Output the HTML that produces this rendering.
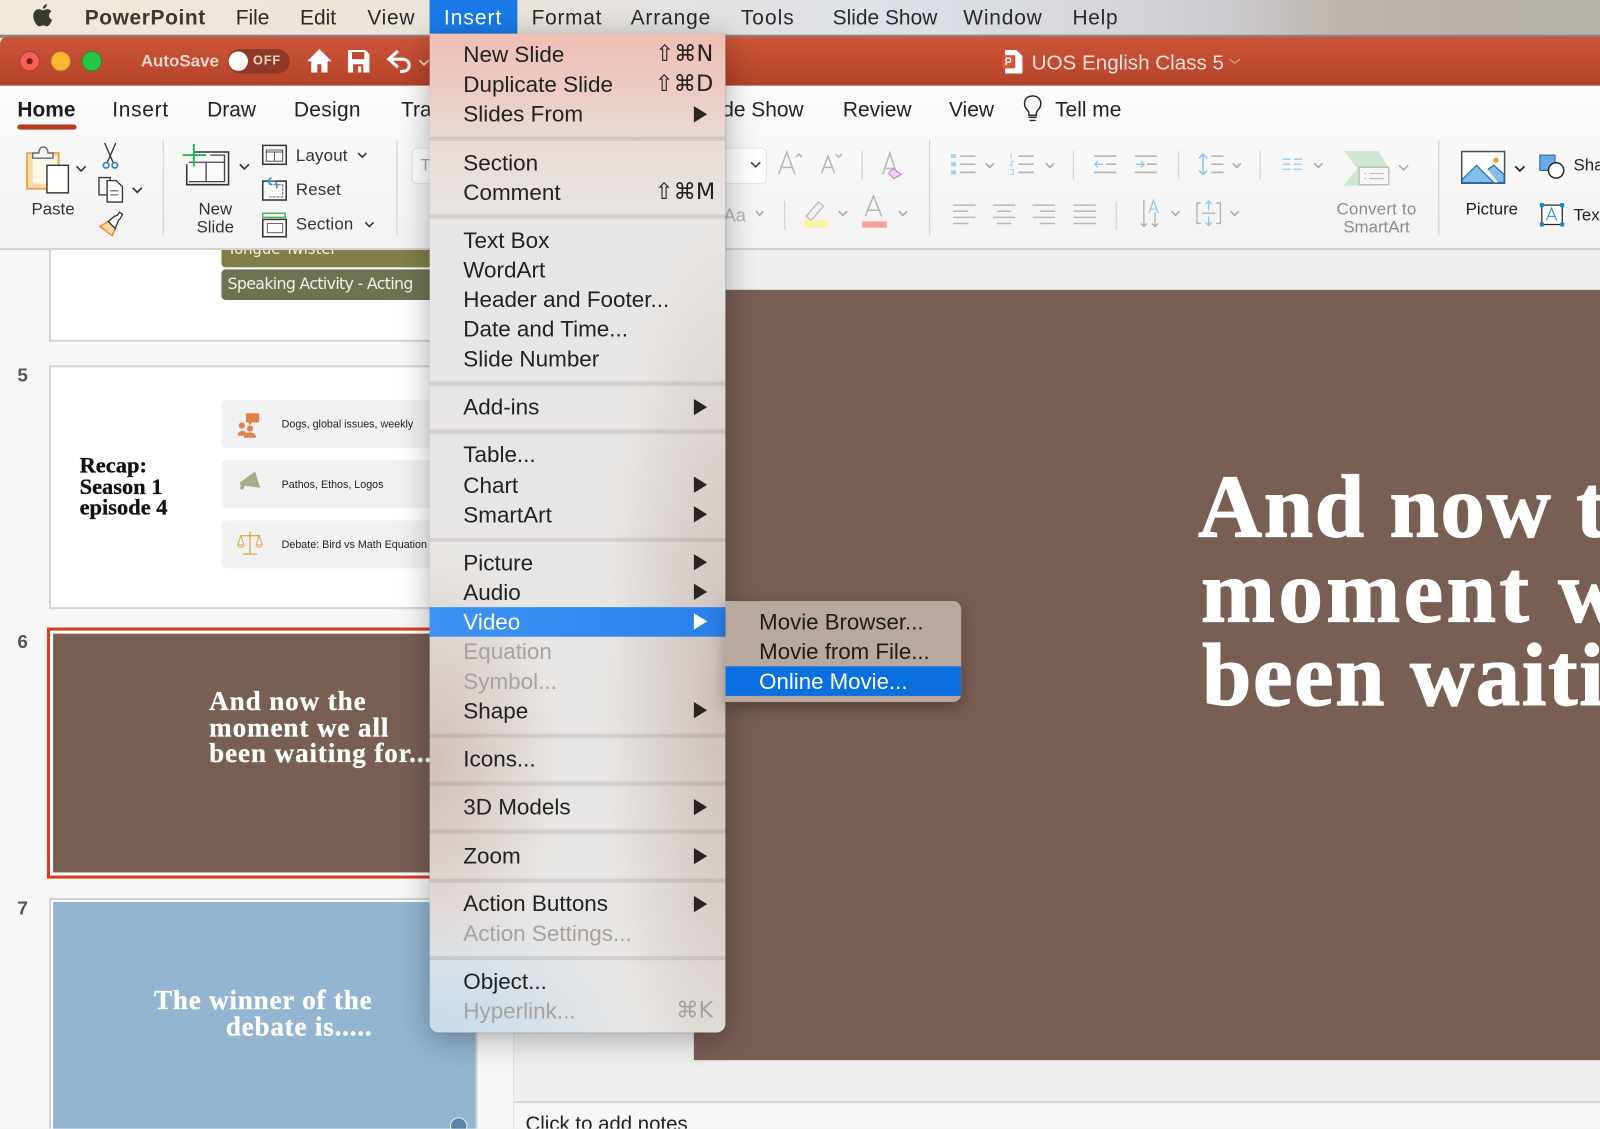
<!DOCTYPE html>
<html><head><meta charset="utf-8"><title>PowerPoint</title>
<style>
html,body{margin:0;padding:0;width:1600px;height:1128px;overflow:hidden;background:#efefef}
#s{position:absolute;left:0;top:0;width:1568px;height:1106px;transform:scale(1.020408);transform-origin:0 0;overflow:hidden;font-family:"Liberation Sans",sans-serif;color:#262626}
#s div,#s span.a{position:absolute;white-space:nowrap}
.t{line-height:26px;height:26px}
.m{font-size:20.5px;color:#2a2a2a;top:5px}
.r{font-size:20.5px;color:#222;top:95px}
.l{font-size:16.5px;color:#333;line-height:20px;height:20px}
.c{transform:translateX(-50%);text-align:center}
.ser{font-family:"Liberation Serif",serif;font-weight:bold;-webkit-text-stroke:.3px currentColor}
#menu{left:421px;top:33px;width:290px;height:979px;border-radius:0 0 9px 9px;
 background:
  radial-gradient(ellipse 210px 125px at 0 100%,rgba(195,218,236,.95),rgba(195,218,236,0)),
  radial-gradient(ellipse 130px 210px at 0 715px,rgba(190,158,148,.55),rgba(190,158,148,0)),
  radial-gradient(ellipse 120px 470px at 100% 650px,rgba(172,142,130,.45),rgba(172,142,130,0)),
  linear-gradient(180deg,#eebfb5 0,#edcac1 50px,#e9dbd6 105px,#e8e6e4 190px,#e8e6e4 100%);
 box-shadow:0 6px 30px rgba(0,0,0,.3),0 0 1px rgba(0,0,0,.3);overflow:hidden}
#menu .i{left:33px;font-size:22px;line-height:26px;height:26px;color:#222;margin-top:1px}
#menu .d{color:#a5a2a0}
#menu .k{left:218px;width:60px;text-align:right;font-size:22px;line-height:26px;height:26px;color:#222;font-family:"DejaVu Sans","Liberation Sans",sans-serif;letter-spacing:0;margin-top:1px}
#menu .sep{left:0;width:290px;height:4px;background:rgba(100,90,85,.15);margin-top:1px}
#menu svg{position:absolute;left:258px}
</style></head><body>
<div id="s">

<!-- menu bar -->
<div style="left:0;top:0;width:1568px;height:34px;background:linear-gradient(90deg,#f1e9da 0,#ece5d8 22%,#e2e1e2 45%,#dde1e7 55%,#d5d6dc 70%,#cbcacd 77%,#bdb4ad 84%,#b7b0a8 92%,#b3b1aa 100%)"></div>
<svg style="position:absolute;left:30px;top:3px" width="24" height="25" viewBox="0 0 24 25"><path fill="#3b3a30" d="M16 1c.2 2-1.600 4.500-4 4.600C11.700 3.400 13.900 1.300 16 1zM12.100 7.200c1 0 2.300-1.200 4.200-1.200 1.700 0 3.200.9 4.100 2.300-3.500 2.100-2.900 6.800.7 8.200-.7 1.700-2.800 6.300-5.300 6.300-1.300 0-1.900-.9-3.500-.9-1.700 0-2.300.9-3.600.9-2.700 0-6.100-5.600-6.100-10.200C2.600 8.500 5.400 6 8 6c1.700 0 3.100 1.200 4.100 1.200z"/></svg>
<div class="m t" style="left:83px;font-weight:bold;color:#3a3a2e;letter-spacing:.6px">PowerPoint</div>
<div class="m t" style="left:231px">File</div>
<div class="m t" style="left:294px">Edit</div>
<div class="m t" style="left:360px;letter-spacing:.7px">View</div>
<div style="left:421px;top:0;width:86px;height:33px;background:#197ae8"></div>
<div class="m t" style="left:435px;color:#fff;letter-spacing:1px">Insert</div>
<div class="m t" style="left:521px;letter-spacing:.7px">Format</div>
<div class="m t" style="left:618px;letter-spacing:.85px">Arrange</div>
<div class="m t" style="left:726px;letter-spacing:1px">Tools</div>
<div class="m t" style="left:816px">Slide Show</div>
<div class="m t" style="left:944px;letter-spacing:.8px">Window</div>
<div class="m t" style="left:1051px;letter-spacing:.7px">Help</div>

<!-- title bar -->
<div style="left:0;top:34px;width:1568px;height:3px;background:#8a8580"></div>
<div style="left:0;top:36px;width:1568px;height:48px;border-radius:7px 0 0 0;background:linear-gradient(180deg,#cb553a 0,#c24c31 50%,#b3432a 100%)"></div>
<svg style="position:absolute;left:0;top:36px" width="1568" height="48" viewBox="0 36 1568 48">
 <circle cx="29" cy="60" r="9.5" fill="#f6605a" stroke="#b53a2c"/><circle cx="29" cy="60" r="3" fill="#7d1a14"/>
 <circle cx="59.500" cy="60" r="9.500" fill="#fcb62f" stroke="#b9772a"/>
 <circle cx="90" cy="60" r="9.500" fill="#2ac444" stroke="#2a8a36"/>
 <rect x="223" y="48" width="61" height="24" rx="12" fill="#8f3a28"/>
 <circle cx="233.500" cy="60" r="9.500" fill="#fafafa"/>
 <!-- home -->
 <path d="M313 48L301 60h4v11h6v-8h4v8h6V60h4z" fill="#fff"/>
 <!-- save -->
 <path d="M341 49h17l4 4v18h-21z" fill="#fff"/><rect x="345" y="51" width="12" height="7" fill="#bd4a30"/><rect x="346" y="63" width="10" height="8" fill="#bd4a30"/><rect x="351" y="65" width="3" height="6" fill="#fff"/>
 <!-- undo -->
 <path d="M390 50l-9 8 9 8M382 58h12c5 0 7 3 7 6s-2 6-7 6h-2" fill="none" stroke="#fff" stroke-width="3"/>
 <path d="M411 59l4.500 4.500 4.500-4.500" fill="none" stroke="#f0cfc6" stroke-width="1.700"/>
 <!-- ppt doc -->
 <path d="M985 49h11l6 6v17h-17z" fill="#fff"/><rect x="982" y="54" width="13" height="13" rx="1.500" fill="#d9553a"/><path d="M986 64v-7h3c2 0 2 4 0 4h-3" fill="none" stroke="#fff" stroke-width="1.300"/>
 <path d="M1205 58l5 4 5-4" fill="none" stroke="#d78e7c" stroke-width="1.600"/>
</svg>
<div class="t" style="left:138px;top:47px;font-size:16.600px;font-weight:bold;color:#f3d6cd">AutoSave</div>
<div class="t" style="left:248px;top:46px;font-size:12.500px;font-weight:bold;color:#eccfc7;letter-spacing:.8px">OFF</div>
<div class="t" style="left:1011px;top:49px;font-size:20.200px;color:#f6e2dc">UOS English Class 5</div>

<!-- ribbon -->
<div style="left:0;top:84px;width:1568px;height:159px;background:linear-gradient(180deg,#fcfcfc 0,#f8f8f8 35%,#f3f3f3 100%)"></div>
<div style="left:0;top:243px;width:1568px;height:2px;background:#d2d2d2"></div>
<div class="r t" style="left:17px;font-weight:bold;color:#1c1c1c">Home</div>
<div style="left:17px;top:122px;width:58px;height:5px;border-radius:3px;background:#b93b1f"></div>
<div class="r t" style="left:110px;letter-spacing:.7px">Insert</div>
<div class="r t" style="left:203px">Draw</div>
<div class="r t" style="left:288px;letter-spacing:.3px">Design</div>
<div class="r t" style="left:393px">Transitions</div>
<div class="r t" style="left:685px">Slide Show</div>
<div class="r t" style="left:826px">Review</div>
<div class="r t" style="left:930px">View</div>
<div class="r t" style="left:1034px">Tell me</div>

<svg style="position:absolute;left:0;top:84px" width="1568" height="160" viewBox="0 84 1568 160" fill="none">
 <!-- bulb -->
 <path d="M1007 108c-5-4-4-14 5-14s10 10 5 14c-1 1-1.500 3-1.500 5h-7c0-2-.5-4-1.500-5z" stroke="#222" stroke-width="1.400"/><path d="M1008 115h8M1009 118h6" stroke="#222" stroke-width="1.400"/>
 <!-- separators -->
 <g stroke="#d6d6d6" stroke-width="1.300"><path d="M160 137v94M389 137v94M911 137v94M1410 137v94"/><path d="M845 148v28M769 197v28M1052 148v28M1155 148v28M1235 148v28M1094 197v28"/></g>
 <!-- paste -->
 <rect x="26.500" y="150" width="31" height="35" fill="#fddba5" stroke="#ee9a3c" stroke-width="1.600"/>
 <rect x="32" y="153" width="24" height="27" fill="#fdf6ea"/>
 <rect x="46" y="162" width="21" height="27" fill="#fff" stroke="#333" stroke-width="1.400"/>
 <path d="M32 155v-5h6c0-8 9-8 9 0h5v5z" fill="#f4f4f4" stroke="#666" stroke-width="1.300"/>
 <path d="M75 163l4.500 4.500 4.500-4.500M130 184l4.500 4.500 4.500-4.500M235 161l4.500 4.500 4.500-4.500M351 150l4 4 4-4M358 218l4 4 4-4" stroke="#333" stroke-width="1.600"/>
 <!-- scissors -->
 <path d="M102.500 140l8.500 19.500M113.500 140l-8.500 19.500" stroke="#333" stroke-width="1.300"/><circle cx="104" cy="162" r="2.700" stroke="#2b83c6" stroke-width="1.600"/><circle cx="112.500" cy="162" r="2.700" stroke="#2b83c6" stroke-width="1.600"/>
 <!-- copy -->
 <path d="M105 191h-8v-17h11v3" stroke="#333" stroke-width="1.300"/><path d="M105 177h9l6 6v15h-15z" fill="#fff" stroke="#333" stroke-width="1.300"/><path d="M108 187h8M108 191h8" stroke="#555"/>
 <!-- brush -->
 <path d="M98 222l8-5 7 7-3 7z" fill="#fbd9a3" stroke="#ee8a30" stroke-width="1.500"/><path d="M106 217l6-5 3-1 2-3 3 2-2 4-2 2-3 8z" fill="#fff" stroke="#333" stroke-width="1.300"/>
 <!-- new slide -->
 <path d="M190 149h34v32h-41v-20" stroke="#333" stroke-width="1.500" fill="#fafafa"/><path d="M185 178h35v-26h-14M185 159h35M202 159v19" stroke="#444" stroke-width="1.300"/>
 <path d="M179 152h23M190 141v22" stroke="#2fb35a" stroke-width="2"/>
 <!-- layout -->
 <rect x="257.500" y="142.500" width="23" height="18.500" fill="#fafafa" stroke="#333" stroke-width="1.500"/><path d="M261 149h16M261 158v-11h16v11zM269 149v9" stroke="#555"/>
 <!-- reset -->
 <rect x="257.500" y="177.500" width="23" height="18.500" fill="#fafafa" stroke="#333" stroke-width="1.500"/><path d="M264 181h13v12h-13" stroke="#777" stroke-dasharray="3 1"/>
 <path d="M266 174l-4 3.500 4 3.500M262 177.500h5c4 0 5 3 4 7" stroke="#2b8fd6" stroke-width="1.500"/>
 <!-- section -->
 <rect x="257.500" y="209" width="22" height="4" stroke="#3fae4e" stroke-width="1.300"/><rect x="257.500" y="215" width="23" height="17" fill="#fafafa" stroke="#333" stroke-width="1.500"/><rect x="262" y="219" width="15" height="9" stroke="#666"/>
 <!-- font box -->
 <rect x="404" y="145" width="347" height="35" rx="5" fill="#fff" stroke="#e2e2e2"/>
 <path d="M736 159l4.500 4.500 4.500-4.500" stroke="#444" stroke-width="1.600"/>
 <g stroke="#b6b6b6" stroke-width="1.500">
  <path d="M763 171l8-22 8 22M766 164h10M780 154l3-3 3 3"/><path d="M805 170l6.500-17 6.500 17M807.500 164h8M819 151l3 3 3-3" />
  <path d="M865 171l7-21 7 21M868 165h8"/>
 </g>
 <path d="M875 165l8 6-7 4-5-5z" fill="#ecd4ea" stroke="#cf8ccc" stroke-width="1.300"/>
 <path d="M741 207l3.500 4 3.500-4M822 207l4 4 4-4M881 207l4 4 4-4M966 160l4 4 4-4M1025 160l4 4 4-4M1208 160l4 4 4-4M1288 160l4 4 4-4M1148 207l4 4 4-4M1206 207l4 4 4-4M1371 162l4.500 4.500 4.500-4.500" stroke="#aaa" stroke-width="1.600"/>
 <path d="M1485 163l4.500 4.500 4.500-4.500" stroke="#222" stroke-width="1.700"/>
 <!-- highlight -->
 <path d="M790 212l12-14 5 4-12 14z" fill="#f2f2f2" stroke="#bbb" stroke-width="1.300"/><rect x="788" y="216" width="23" height="7" fill="#f8f3a0"/>
 <path d="M848 212l8-20 8 20M851 206h10" stroke="#b6b6b6" stroke-width="1.500"/><rect x="845" y="217" width="24" height="6" fill="#f99c9c"/>
 <!-- bullets -->
 <g fill="#a9d1ee"><rect x="932" y="151" width="5" height="4"/><rect x="932" y="159" width="5" height="4"/><rect x="932" y="167" width="5" height="4"/></g>
 <g stroke="#b2b2b2" stroke-width="1.500"><path d="M941 153h15M941 161h15M941 169h15M998 153h15M998 161h15M998 169h15"/></g>
 <path d="M991 150v5M990 158h3l-3 4h3M990 166h3v5h-3" stroke="#a9d1ee"/>
 <!-- indent -->
 <g stroke="#b2b2b2" stroke-width="1.500"><path d="M1072 153h22M1084 161h10M1072 169h22M1112 153h22M1124 161h10M1112 169h22"/></g>
 <path d="M1081 161h-8m3-3l-3 3 3 3M1113 161h8m-3-3l3 3-3 3" stroke="#8ec5ea" stroke-width="1.300"/>
 <!-- line spacing -->
 <path d="M1179 151v20m-4-16l4-4 4 4m-8 12l4 4 4-4" stroke="#8ec5ea" stroke-width="1.500"/><path d="M1187 153h12M1187 161h12M1187 169h12" stroke="#b2b2b2" stroke-width="1.500"/>
 <!-- columns -->
 <path d="M1257 156h8M1257 161h8M1257 166h8M1268 156h8M1268 161h8M1268 166h8" stroke="#a9d1ee" stroke-width="1.500"/>
 <!-- smartart -->
 <path d="M1317 148h34l12 20-11 14h-35l13-17z" fill="#cfe6d2"/>
 <rect x="1332" y="164" width="29" height="17" fill="#f6f6f6" stroke="#bbb" stroke-width="1.300"/><path d="M1337 170h2M1342 170h14M1337 175h2M1342 175h14" stroke="#bbb"/>
 <!-- align -->
 <g stroke="#b8b8b8" stroke-width="1.500"><path d="M934 201h22M934 207h15M934 213h22M934 219h15M973 201h22M977 207h14M973 213h22M977 219h14M1012 201h22M1019 207h15M1012 213h22M1019 219h15M1052 201h22M1052 207h22M1052 213h22M1052 219h22"/></g>
 <path d="M1121 196v26m-3-3l3 3 3-3M1132 208v14m-3-3l3 3 3-3" stroke="#aaa" stroke-width="1.200"/>
 <path d="M1126 209l4.500-13 4.500 13M1128 205h5" stroke="#8ec5ea" stroke-width="1.200"/>
 <path d="M1177 199h-4v20h4M1192 199h4v20h-4M1178 209h13" stroke="#b0b0b0" stroke-width="1.300"/><path d="M1184.500 197v9m-3-6l3-3 3 3M1184.500 212v9m-3-3l3 3 3-3" stroke="#8ec5ea" stroke-width="1.300"/>
 <!-- picture -->
 <rect x="1432.500" y="148.500" width="42" height="31" fill="#fff" stroke="#44525e" stroke-width="1.500"/>
 <path d="M1433 176l14-14 17 17h-31zM1458 166l6-4 10 9v8h-6" fill="#84bdea" stroke="#1f6fb0" stroke-width="1.200"/>
 <circle cx="1466" cy="157" r="2.600" fill="#f79a3c"/>
 <!-- shapes -->
 <rect x="1509" y="152" width="15" height="15" fill="#6aa9e3" stroke="#1e63a8"/><circle cx="1525" cy="167" r="7.500" fill="#fff" stroke="#222" stroke-width="1.400"/>
 <!-- textbox -->
 <rect x="1511" y="201" width="20" height="19" fill="#fff" stroke="#222" stroke-width="1.200"/>
 <g fill="#1d86d8"><rect x="1509" y="199" width="4" height="4"/><rect x="1529" y="199" width="4" height="4"/><rect x="1509" y="218" width="4" height="4"/><rect x="1529" y="218" width="4" height="4"/></g>
 <path d="M1515.500 216l5-12 5 12M1517.500 212h6" stroke="#3d93d8" stroke-width="1.200"/>
</svg>
<div class="l c" style="left:52px;top:195px">Paste</div>
<div class="l c" style="left:211px;top:195px">New</div>
<div class="l c" style="left:211px;top:213px">Slide</div>
<div class="l" style="left:290px;top:143px;letter-spacing:.2px">Layout</div>
<div class="l" style="left:290px;top:176px;letter-spacing:.2px">Reset</div>
<div class="l" style="left:290px;top:210px;letter-spacing:.2px">Section</div>
<div class="l" style="left:412px;top:152px;color:#aaa">T</div>
<div class="l" style="left:709px;top:201px;color:#b5b5b5;font-size:18px">Aa</div>
<div class="l c" style="left:1349px;top:195px;color:#8c8c8c;letter-spacing:.2px">Convert to</div>
<div class="l c" style="left:1349px;top:213px;color:#8c8c8c">SmartArt</div>
<div class="l c" style="left:1462px;top:195px;color:#222">Picture</div>
<div class="l" style="left:1542px;top:152px;color:#222">Shapes</div>
<div class="l" style="left:1542px;top:201px;color:#222">Text Box</div>

<!-- left pane -->
<div style="left:0;top:245px;width:503px;height:861px;background:#f7f7f7"></div>
<div style="left:502.500px;top:245px;width:1.500px;height:861px;background:#dcdcdc"></div>
<!-- main -->
<div style="left:504px;top:245px;width:1064px;height:835px;background:#efefef"></div>
<div style="left:504px;top:1079px;width:1064px;height:27px;background:#f6f6f6;border-top:2px solid #d9d9d9;box-sizing:border-box"></div>
<div style="left:515px;top:1092px;font-size:20px;line-height:20px;color:#222">Click to add notes</div>
<div style="left:680px;top:284px;width:888px;height:755px;background:#795e54;overflow:hidden">
 <div class="ser" style="left:494px;top:172px;font-size:87px;line-height:82.500px;color:#fff;letter-spacing:1.600px;-webkit-text-stroke:1.200px #fff">And now the<br><span style="margin-left:3px;letter-spacing:3.400px">moment we all</span><br><span style="margin-left:4px">been waiting for...</span></div>
</div>

<!-- slide 4 -->
<div style="left:48px;top:245px;width:420px;height:90px;box-sizing:border-box;background:#fff;border:2px solid #d4d4d4;border-top:none;overflow:hidden">
 <div style="left:167px;top:-20px;width:260px;height:37px;border-radius:0 0 4px 4px;background:#7f7f47"></div>
 <div style="left:173px;top:-10px;font-family:'DejaVu Sans',sans-serif;font-size:14.500px;line-height:20px;color:#f2f2e6">Tongue Twister</div>
 <div style="left:167px;top:19px;width:260px;height:30px;border-radius:4px;background:#6d7352"></div>
 <div style="left:173px;top:23px;font-family:'DejaVu Sans',sans-serif;font-size:15.500px;line-height:20px;color:#f2f2e6;letter-spacing:-.67px">Speaking Activity - Acting</div>
</div>
<!-- slide 5 -->
<div style="left:48px;top:358px;width:420px;height:239px;box-sizing:border-box;background:#fff;border:2px solid #d4d4d4;overflow:hidden">
 <div class="ser" style="left:28px;top:86px;font-size:22px;line-height:20.700px;color:#111">Recap:<br>Season 1<br>episode 4</div>
 <div style="left:167px;top:32px;width:300px;height:47px;border-radius:5px;background:#f1f1f1"></div>
 <div style="left:167px;top:91px;width:300px;height:47px;border-radius:5px;background:#f1f1f1"></div>
 <div style="left:167px;top:150px;width:300px;height:47px;border-radius:5px;background:#f1f1f1"></div>
 <div style="left:226px;top:49px;font-size:10.500px;line-height:14px;color:#222">Dogs, global issues, weekly</div>
 <div style="left:226px;top:108px;font-size:10.500px;line-height:14px;color:#222">Pathos, Ethos, Logos</div>
 <div style="left:226px;top:167px;font-size:10.500px;line-height:14px;color:#222">Debate: Bird vs Math Equation</div>
 <svg style="position:absolute;left:180px;top:40px" width="30" height="160" viewBox="0 0 30 160">
  <rect x="11" y="5" width="13" height="9" rx="1" fill="#e2804a"/><path d="M14 14l0 3 3-3z" fill="#e2804a"/>
  <circle cx="7" cy="17" r="3" fill="#e2804a"/><circle cx="15" cy="20" r="3" fill="#e2804a"/><path d="M3 27c0-6 8-6 8-2l0 2zM9 29c0-7 12-7 12 0z" fill="#e2804a"/>
  <path d="M5 73l15-11 5 16-15-2-2 4-3-1 1-3z" fill="#a6ad85"/>
  <path d="M15 121v22M5 125h20M8 143h14" stroke="#dfa94e" stroke-width="1.400" fill="none"/><path d="M6 125l-3 9h6zM24 125l-3 9h6zM3 134c1 3 5 3 6 0M21 134c1 3 5 3 6 0" stroke="#dfa94e" fill="none"/>
 </svg>
</div>
<div class="num" style="left:17px;top:358px;font-size:18.500px;font-weight:bold;line-height:20px;color:#555">5</div>
<div class="num" style="left:17px;top:619px;font-size:18.500px;font-weight:bold;line-height:20px;color:#555">6</div>
<div class="num" style="left:17px;top:880px;font-size:18.500px;font-weight:bold;line-height:20px;color:#555">7</div>
<!-- slide 6 -->
<div style="left:46px;top:615px;width:424px;height:246px;box-sizing:border-box;background:#fff;border:3.500px solid #d2401f;overflow:hidden">
 <div style="left:2.500px;top:2.500px;width:420px;height:234px;background:#795e54"></div>
 <div class="ser" style="left:156px;top:57px;font-size:26.500px;line-height:25.500px;color:#fff;letter-spacing:.9px">And now the<br>moment we all<br>been waiting for...</div>
</div>
<!-- slide 7 -->
<div style="left:48px;top:880px;width:420px;height:230px;box-sizing:border-box;background:#fff;border:2px solid #d4d4d4;border-left-width:2px;overflow:hidden">
 <div style="left:2px;top:1.500px;width:416px;height:230px;background:#93b5d1"></div>
 <div class="ser" style="left:0;top:86px;width:315px;text-align:right;font-size:26.500px;line-height:25.500px;color:#fff;letter-spacing:.8px">The winner of the<br>debate is.....</div>
 <div style="left:391px;top:213px;width:15px;height:15px;border-radius:50%;background:#5b83a6;border:1px solid #e8eef3"></div>
</div>

<!-- Insert menu -->
<div id="menu">
 <div class="i" style="top:7px">New Slide</div><div class="k" style="top:7px">⇧⌘N</div>
 <div class="i" style="top:36px">Duplicate Slide</div><div class="k" style="top:36px">⇧⌘D</div>
 <div class="i" style="top:65px">Slides From</div>
 <div class="sep" style="top:100px"></div>
 <div class="i" style="top:113px">Section</div>
 <div class="i" style="top:142px">Comment</div><div class="k" style="top:142px;left:220px">⇧⌘M</div>
 <div class="sep" style="top:176px"></div>
 <div class="i" style="top:189px">Text Box</div>
 <div class="i" style="top:218px">WordArt</div>
 <div class="i" style="top:247px">Header and Footer...</div>
 <div class="i" style="top:276px">Date and Time...</div>
 <div class="i" style="top:305px">Slide Number</div>
 <div class="sep" style="top:340px"></div>
 <div class="i" style="top:352px">Add-ins</div>
 <div class="sep" style="top:387px"></div>
 <div class="i" style="top:399px">Table...</div>
 <div class="i" style="top:429px">Chart</div>
 <div class="i" style="top:458px">SmartArt</div>
 <div class="sep" style="top:493px"></div>
 <div class="i" style="top:505px">Picture</div>
 <div class="i" style="top:534px">Audio</div>
 <div style="left:0;top:562px;width:290px;height:29px;background:linear-gradient(90deg,#3f92f3,#3189f0 60%,#2a80e8)"></div>
 <div class="i" style="top:563px;color:#fff">Video</div>
 <div class="i d" style="top:592px">Equation</div>
 <div class="i d" style="top:621px">Symbol...</div>
 <div class="i" style="top:650px">Shape</div>
 <div class="sep" style="top:685px"></div>
 <div class="i" style="top:697px">Icons...</div>
 <div class="sep" style="top:732px"></div>
 <div class="i" style="top:744px">3D Models</div>
 <div class="sep" style="top:779px"></div>
 <div class="i" style="top:792px">Zoom</div>
 <div class="sep" style="top:827px"></div>
 <div class="i" style="top:839px">Action Buttons</div>
 <div class="i d" style="top:868px">Action Settings...</div>
 <div class="sep" style="top:903px"></div>
 <div class="i" style="top:915px">Object...</div>
 <div class="i d" style="top:944px">Hyperlink...</div><div class="k" style="top:944px;color:#a5a2a0">⌘K</div>
 <svg style="top:0" width="16" height="978" viewBox="0 0 16 978"><g fill="#2a2522">
  <path d="M1 71l13 8-13 8zM1 358l13 8-13 8zM1 434l13 8-13 8zM1 463l13 8-13 8zM1 510l13 8-13 8zM1 539l13 8-13 8zM1 655l13 8-13 8zM1 750l13 8-13 8zM1 798l13 8-13 8zM1 845l13 8-13 8z"/></g>
  <path d="M1 568l13 8-13 8z" fill="#fff"/></svg>
</div>

<!-- submenu -->
<div style="left:711px;top:589px;width:231px;height:99px;background:#b9a89e;border-radius:0 8px 8px 0;box-shadow:0 5px 16px rgba(0,0,0,.3);overflow:hidden">
 <div style="left:33px;top:8px;font-size:21.800px;line-height:26px;color:#1f1b19">Movie Browser...</div>
 <div style="left:33px;top:37px;font-size:21.800px;line-height:26px;color:#1f1b19">Movie from File...</div>
 <div style="left:0;top:64px;width:231px;height:29px;background:#0a6fe0"></div>
 <div style="left:33px;top:66px;font-size:21.800px;line-height:26px;color:#fff">Online Movie...</div>
</div>
</div>
</body></html>
